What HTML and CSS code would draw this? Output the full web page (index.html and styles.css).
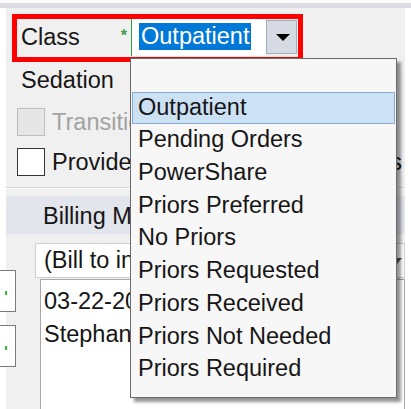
FILE: index.html
```html
<!DOCTYPE html>
<html>
<head>
<meta charset="utf-8">
<link rel="stylesheet" href="styles.css">
</head>
<body>
<div class="app">
  <div class="topband"></div>
  <div class="panel">
    <div class="classbox">
      <div class="lbl"><span>Class</span><span class="req">*</span></div>
      <div class="combo">
        <div class="field"><span class="sel">Outpatient</span></div>
        <div class="btn"><span class="tri"></span></div>
      </div>
    </div>
    <div class="sed">Sedation</div>
    <div class="chkrow dis"><span class="box"></span><span class="txt">Transition</span></div>
    <div class="chkrow"><span class="box"></span><span class="txt">Provider</span><span class="far">Reports</span></div>
    <div class="sep"></div>
    <div class="band">Billing Method</div>
    <div class="lower">
      <div class="side">
        <div class="mini"><i></i></div>
        <div class="mini second"><i></i></div>
      </div>
      <div class="main">
        <div class="bill"><span>(Bill to insurance)</span><span class="arrow"></span></div>
        <div class="notes">03-22-2019 10:15<br>Stephanie</div>
      </div>
    </div>
  </div>
  <ul class="list">
    <li class="opt"></li>
    <li class="opt hl">Outpatient</li>
    <li class="opt">Pending Orders</li>
    <li class="opt">PowerShare</li>
    <li class="opt">Priors Preferred</li>
    <li class="opt">No Priors</li>
    <li class="opt">Priors Requested</li>
    <li class="opt">Priors Received</li>
    <li class="opt">Priors Not Needed</li>
    <li class="opt">Priors Required</li>
  </ul>
</div>
</body>
</html>
```
FILE: styles.css
```css
* { box-sizing: border-box; }
html, body { margin: 0; padding: 0; }
body {
  font-family: "Liberation Sans", Arial, sans-serif;
  font-size: 23.5px;
  color: #161616;
  background: #ffffff;
}
.app {
  position: relative;
  width: 411px;
  height: 409px;
  overflow: hidden;
  padding-top: 3px;
  background: #ffffff;
}
.topband {
  height: 5px;
  background: #dcdde3;
}
.panel {
  margin: 0 6px;
  height: 401px;
  background: #f0f0f0;
  padding-top: 6px;
}
.classbox {
  margin-left: 6px;
  width: 291px;
  height: 48px;
  border: 5px solid #ff0000;
  display: flex;
}
.lbl {
  width: 114px;
  display: flex;
  align-items: flex-start;
  padding: 4px 0 0 4px;
  line-height: 28px;
}
.req {
  margin-left: auto;
  margin-right: 4px;
  margin-top: 5px;
  color: #3d9e46;
  font-size: 16px;
  line-height: 16px;
  font-weight: bold;
}
.combo {
  flex: 1;
  display: flex;
  height: 37px;
  border-left: 1px solid #2f9a3f;
  margin-right: 1px;
}
.field {
  flex: 1;
  background: #ffffff;
  padding: 4px 0 0 7px;
}
.sel {
  display: inline-block;
  background: #0078d7;
  color: #ffffff;
  line-height: 27px;
  padding: 0 2px;
}
.btn {
  width: 31px;
  height: 34px;
  margin-top: 1px;
  border: 1px solid #a3adc0;
  background: #d6dae3;
  display: flex;
  align-items: center;
  justify-content: center;
}
.tri {
  width: 0;
  height: 0;
  border-left: 7px solid transparent;
  border-right: 7px solid transparent;
  border-top: 7px solid #000000;
  margin-left: 2px;
}
.sed {
  height: 40px;
  padding: 4px 0 0 15px;
  line-height: 28px;
}
.chkrow {
  height: 40px;
  display: flex;
  align-items: center;
  padding-left: 11px;
  gap: 7px;
  white-space: nowrap;
}
.box {
  width: 28px;
  height: 28px;
  flex: none;
  background: #ffffff;
  border: 1px solid #333333;
}
.dis .box {
  background: #e6e6e6;
  border-color: #bdbdbd;
}
.dis .txt { color: #a3a3a3; }
.far {
  margin-left: auto;
  padding-right: 3px;
}
.sep {
  margin-top: 5px;
  height: 2px;
  border-top: 1px solid #d6d6d8;
  border-bottom: 1px solid #fafafa;
}
.band {
  margin-top: 7px;
  height: 38px;
  background: #e3e5ed;
  padding: 3px 0 0 37px;
  line-height: 34px;
  white-space: nowrap;
}
.lower {
  display: flex;
  margin-top: 9px;
}
.side {
  width: 16px;
  margin-left: -6px;
  padding-top: 27px;
  flex: none;
}
.mini {
  height: 42px;
  background: #ffffff;
  border: 1px solid #7a7a7a;
  border-left: none;
  display: flex;
  align-items: center;
  padding-left: 5px;
}
.mini.second { margin-top: 13px; }
.mini i {
  display: block;
  width: 2px;
  height: 4px;
  margin-top: 3px;
  background: #2fc52f;
}
.main {
  flex: 1;
  margin-left: 19px;
}
.bill {
  height: 35px;
  background: #ffffff;
  border: 1px solid #cfcfcf;
  display: flex;
  align-items: center;
  padding-left: 8px;
  white-space: nowrap;
}
.arrow {
  margin-left: auto;
  margin-right: 2px;
  width: 0;
  height: 0;
  border-left: 5px solid transparent;
  border-right: 5px solid transparent;
  border-top: 6px solid #555555;
}
.notes {
  margin: 1px 0 0 5px;
  height: 140px;
  background: #ffffff;
  border: 1px solid #a8a8a8;
  padding: 5px 0 0 3px;
  line-height: 33px;
  white-space: nowrap;
}
.list {
  position: absolute;
  left: 130px;
  top: 58px;
  width: 267px;
  height: 340px;
  margin: 0;
  padding: 0;
  list-style: none;
  background: #f7f7f7;
  border: 1px solid #6a6a6a;
  box-shadow: 4px 4px 3px rgba(0, 0, 0, 0.42);
}
.opt {
  height: 32.7px;
  line-height: 30px;
  padding-left: 7px;
  white-space: nowrap;
}
.opt.hl {
  margin: 0 1px;
  padding-left: 5px;
  background: #cde1f4;
  border: 1px solid #86abd6;
  line-height: 28px;
}
```
